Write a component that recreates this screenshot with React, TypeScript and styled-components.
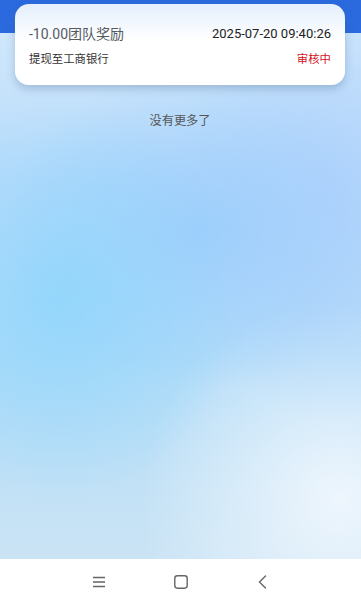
import styled, { createGlobalStyle } from 'styled-components';

const GlobalStyle = createGlobalStyle`
  html, body {
    margin: 0;
    padding: 0;
  }
  body {
    font-family: Roboto, "Noto Sans CJK SC", sans-serif;
  }
`;

const records = [
  {
    title: '-10.00团队奖励',
    time: '2025-07-20 09:40:26',
    desc: '提现至工商银行',
    status: '审核中',
  },
];

const App = () => {
  return (
    <>
      <GlobalStyle />
      <Page>
        <Header />
        <Content>
          <List>
            {records.map((r) => (
              <Card key={r.time}>
                <Row>
                  <Title>{r.title}</Title>
                  <Time>{r.time}</Time>
                </Row>
                <Row>
                  <Desc>{r.desc}</Desc>
                  <Status>{r.status}</Status>
                </Row>
              </Card>
            ))}
          </List>
          <NoMore>没有更多了</NoMore>
        </Content>
        <NavBar>
          <NavButton aria-label='menu'>
            <svg width='16' height='16' viewBox='0 0 16 16'>
              <path d='M2 3.5h12M2 8h12M2 12.5h12' stroke='#666' strokeWidth='1.4' fill='none' />
            </svg>
          </NavButton>
          <NavButton aria-label='home'>
            <svg width='16' height='16' viewBox='0 0 16 16'>
              <rect x='1.8' y='1.8' width='12.4' height='12.4' rx='2.6' stroke='#666' strokeWidth='1.4' fill='none' />
            </svg>
          </NavButton>
          <NavButton aria-label='back'>
            <svg width='16' height='16' viewBox='0 0 16 16'>
              <path d='M10.5 2L4.5 8l6 6' stroke='#666' strokeWidth='1.4' fill='none' strokeLinecap='round' />
            </svg>
          </NavButton>
        </NavBar>
      </Page>
    </>
  );
};

const Page = styled.div`
  position: relative;
  width: 361px;
  height: 595px;
  overflow: hidden;
  display: flex;
  flex-direction: column;
  background:
    radial-gradient(ellipse 180px 200px at 60px 300px, rgba(145, 214, 252, 0.9), rgba(145, 214, 252, 0) 100%),
    radial-gradient(ellipse 200px 160px at 200px 230px, rgba(155, 205, 252, 0.9), rgba(155, 205, 252, 0) 100%),
    radial-gradient(ellipse 160px 220px at 330px 200px, rgba(176, 210, 252, 0.9), rgba(176, 210, 252, 0) 100%),
    radial-gradient(ellipse 200px 200px at 340px 500px, rgba(238, 246, 253, 1), rgba(238, 246, 253, 0) 100%),
    linear-gradient(180deg, #d4eafb 0%, #b9dbfb 30%, #b2dcf8 60%, #cfe5f4 100%);
`;

const Header = styled.div`
  position: absolute;
  top: 0;
  left: 0;
  right: 0;
  height: 33px;
  background: #2b6ade;
`;

const Content = styled.div`
  position: relative;
  flex: 1;
  display: flex;
  flex-direction: column;
  padding: 4px 16px 0 15px;
`;

const List = styled.div`
  display: flex;
  flex-direction: column;
  gap: 10px;
`;

const Card = styled.div`
  height: 81px;
  box-sizing: border-box;
  padding: 21px 14px 0 14px;
  border-radius: 14px;
  background: linear-gradient(180deg, #e4effc 0%, #ffffff 45%, #ffffff 100%);
  box-shadow: 0 4px 8px rgba(60, 90, 130, 0.28);
  display: flex;
  flex-direction: column;
  gap: 8px;
`;

const Row = styled.div`
  display: flex;
  justify-content: space-between;
  align-items: center;
`;

const Title = styled.span`
  font-size: 14px;
  line-height: 18px;
  color: #555a60;
`;

const Time = styled.span`
  font-size: 13px;
  line-height: 18px;
  color: #222;
`;

const Desc = styled.span`
  font-size: 11.4px;
  line-height: 16px;
  color: #333;
`;

const Status = styled.span`
  font-size: 11.4px;
  line-height: 16px;
  color: #d0141c;
`;

const NoMore = styled.div`
  margin-top: 28px;
  text-align: center;
  font-size: 12.2px;
  line-height: 16px;
  color: #555;
`;

const NavBar = styled.div`
  height: 36px;
  background: #fff;
  display: flex;
  justify-content: center;
  align-items: center;
  gap: 66px;
  padding-top: 10px;
  box-sizing: border-box;
  height: 36px;
`;

const NavButton = styled.button`
  border: none;
  background: transparent;
  padding: 0;
  width: 16px;
  height: 16px;
  display: flex;
  align-items: center;
  justify-content: center;
`;

export default App;
